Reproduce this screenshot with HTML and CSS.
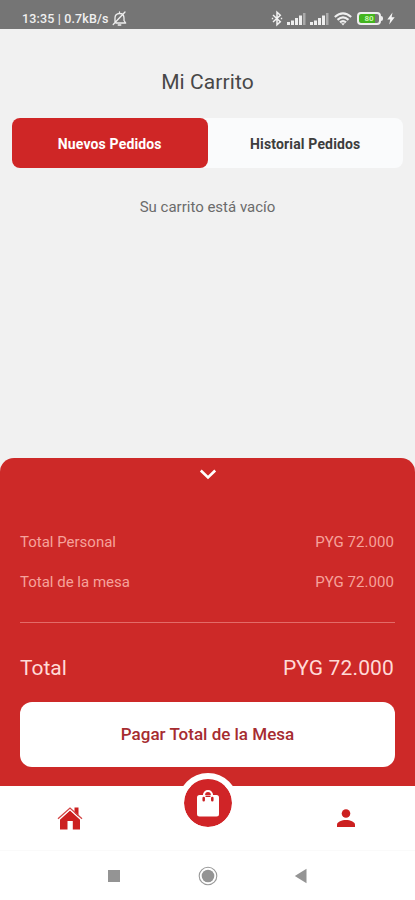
FILE: index.html
```html
<!DOCTYPE html>
<html lang="es">
<head>
<meta charset="utf-8">
<meta name="viewport" content="width=device-width, initial-scale=1">
<title>Mi Carrito</title>
<link rel="stylesheet" href="styles.css">
</head>
<body>
<div class="app">
  <header class="status">
    <span class="status-text">13:35 | 0.7kB/s</span>
    <svg class="bell" width="15" height="16" viewBox="0 0 15 16" fill="none" stroke="#eee" stroke-width="1.3" stroke-linecap="round" stroke-linejoin="round">
      <path d="M3 11.5V7C3 4.5 4.5 2.5 7.5 2.5S12 4.5 12 7v2.5l1.7 2.5H4M6.2 14h2.6M7.5 1v1.2M13 1 1.2 13.5"/>
    </svg>
    <div class="indicators">
      <svg width="12" height="17" viewBox="0 0 12 17" fill="none" stroke="#f2f2f2" stroke-width="1.500"><path d="M2 5 9.300 11.700 6 14.800V2.200l3.300 3.100L2 12"/><path d="M.8 8.500h1.400M9.800 8.500h1.400"/></svg>
      <svg class="signal" width="19" height="14" viewBox="0 0 19 14" fill="#eee"><path d="M0 10h3v3H0zM4 8.500h3V13H4zM8 6h3v7H8zM12 3.500h3V13h-3z"/><path d="M16 1h2.500v12H16z" fill="#aaa"/></svg>
      <svg class="signal" width="19" height="14" viewBox="0 0 19 14" fill="#eee"><path d="M0 10h3v3H0zM4 8.500h3V13H4zM8 6h3v7H8zM12 3.500h3V13h-3z"/><path d="M16 1h2.500v12H16z" fill="#aaa"/></svg>
      <svg class="wifi" width="18" height="14" viewBox="0 0 18 14" fill="none" stroke="#eee" stroke-width="2.100"><path d="M.8 5Q9-2.200 17.200 5M3.500 7.900Q9 3 14.500 7.900M6 10.400Q9 7.800 12 10.400"/><path d="M7 11.300h4L9 13.500z" fill="#eee" stroke="none"/></svg>
      <div class="battery"><span>80</span></div>
      <svg class="bolt" width="8" height="13" viewBox="0 0 8 13" fill="#f4f4f4"><path d="M5.500.5.3 7.500h3L2.200 12.500 7.700 5.300H4.600z"/></svg>
    </div>
  </header>

  <main class="cart">
    <h1 class="title">Mi Carrito</h1>
    <div class="tabs">
      <button class="tab tab-active">Nuevos Pedidos</button>
      <button class="tab">Historial Pedidos</button>
    </div>
    <p class="empty">Su carrito está vacío</p>
  </main>

  <section class="summary">
    <svg class="chevron" width="18" height="12" viewBox="0 0 18 12" fill="none" stroke="#fff" stroke-width="2.600"><path d="m1.800 1.500 7.200 7 7.200-7"/></svg>
    <div class="row"><span>Total Personal</span><span class="amount">PYG 72.000</span></div>
    <div class="row"><span>Total de la mesa</span><span class="amount">PYG 72.000</span></div>
    <div class="row total"><span>Total</span><span class="grand">PYG 72.000</span></div>
    <button class="pay">Pagar Total de la Mesa</button>
  </section>

  <nav class="tabbar">
    <svg class="home" width="26" height="24" viewBox="0 0 26 24"><path d="M17.500 1.500h4v9l-4-3zM13 4 23 13.500v10h-7.200v-8.500h-5.300v8.500H3V13.500z" fill="#cc2020"/><path d="M1.800 13.800 13 3.800l11.200 10" fill="none" stroke="#fff" stroke-width="1.100"/><path d="M1 12.700 13 2l12 10.700" fill="none" stroke="#d34444" stroke-width="1.300"/></svg>
    <div class="fab">
      <svg width="24" height="30" viewBox="0 0 24 30"><path d="M8 8.500V7a4 4 0 0 1 8 0v1.500" fill="none" stroke="#fff" stroke-width="2.200"/><rect x="1" y="7" width="22" height="21.500" rx="2.500" fill="#fff"/><path d="M7.700 10v2.200M16.300 10v2.200" stroke="#c91f22" stroke-width="2.500" stroke-linecap="round"/><path d="M9.500 8.300h5" stroke="#c91f22" stroke-width="1.400"/></svg>
    </div>
    <svg class="user" width="18" height="18" viewBox="0 0 18 18" fill="#cc2020"><circle cx="9" cy="4.500" r="4.300"/><path d="M0 18v-2.500c0-2.700 5-4.500 9-4.500s9 1.800 9 4.500V18z"/></svg>
  </nav>

  <footer class="system">
    <svg width="14" height="14" viewBox="0 0 14 14"><path d="M1 1h12v12H1z" fill="#949494"/></svg>
    <svg width="20" height="20" viewBox="0 0 20 20"><circle cx="10" cy="10" r="8.800" fill="#fff" stroke="#999" stroke-width="1.100"/><circle cx="10" cy="10" r="6.300" fill="#949494"/></svg>
    <svg width="14" height="16" viewBox="0 0 14 16"><path d="M.8 8 12.500.7v14.600z" fill="#949494"/></svg>
  </footer>
</div>
</body>
</html>
```

FILE: styles.css
```css
* { box-sizing: border-box; }
body {
  margin: 0;
  font-family: Roboto, "Liberation Sans", sans-serif;
  background: #f1f1f1;
}
button { border: 0; padding: 0; font: inherit; }
svg { display: block; flex: none; }
.app {
  width: 415px;
  height: 900px;
  display: flex;
  flex-direction: column;
  overflow: hidden;
}
.status {
  height: 29px;
  background: #757575;
  color: #f0f0f0;
  display: flex;
  align-items: center;
  padding: 8px 20px 0 22px;
}
.status-text {
  width: 90px;
  font-size: 12.5px;
  font-weight: 500;
  line-height: 16px;
  letter-spacing: 0.15px;
  white-space: nowrap;
}
.indicators { margin-left: auto; display: flex; align-items: center; }
.signal { margin-left: 4px; }
.wifi { margin-left: 5px; }
.battery {
  position: relative;
  width: 24px;
  height: 13px;
  margin-left: 5px;
  border: 2px solid #eee;
  border-radius: 4px;
  background: linear-gradient(90deg, #43b51f 78%, #777 78%);
  background-clip: padding-box;
  color: #c6f5ae;
  font-size: 8px;
  font-weight: 700;
  line-height: 9px;
  text-align: center;
}
.battery::after {
  content: "";
  position: absolute;
  right: -4px;
  top: 2px;
  width: 3px;
  height: 5px;
  border-radius: 0 2px 2px 0;
  background: #eee;
}
.bolt { margin-left: 6px; }
.cart { flex: 1; padding: 0 12px; }
.title {
  margin: 38px 0 21px;
  font-size: 21px;
  line-height: 30px;
  font-weight: 400;
  text-align: center;
  color: #484848;
  letter-spacing: 0.1px;
}
.tabs {
  display: flex;
  width: 391px;
  height: 50px;
  border-radius: 8px;
  background: #fafbfc;
}
.tab {
  flex: 1;
  padding-top: 2px;
  border-radius: 8px;
  background: transparent;
  color: #3d3d3d;
  font-size: 14px;
  font-weight: 700;
  letter-spacing: 0.15px;
}
.tab-active { background: #cf2626; color: #fff; }
.empty {
  margin: 29px 0 0;
  font-size: 15px;
  line-height: 20px;
  text-align: center;
  color: #6b6b6b;
}
.summary {
  height: 328px;
  padding: 11px 20px 0;
  border-radius: 14px 14px 0 0;
  background: #cd2928;
  color: #f6a29b;
  font-size: 15px;
}
.chevron { margin: 0 auto 41px; }
.row {
  display: flex;
  justify-content: space-between;
  align-items: center;
  height: 40px;
}
.amount { letter-spacing: 0.05px; padding-right: 1px; }
.total {
  margin-top: 20px;
  height: 80px;
  padding-top: 11px;
  border-top: 1px solid #e36b68;
  font-size: 21px;
  color: #ffdad7;
}
.grand { letter-spacing: 0.15px; padding-right: 1px; }
.pay {
  display: block;
  width: 375px;
  height: 65px;
  padding-bottom: 1px;
  border-radius: 12px;
  background: #fff;
  color: #a62c30;
  font-size: 17px;
  font-weight: 500;
}
.tabbar {
  position: relative;
  height: 65px;
  background: #fff;
  display: flex;
  justify-content: space-between;
  align-items: center;
  padding: 0 60px 0 57px;
  border-bottom: 1px solid #fafafa;
}
.fab {
  position: absolute;
  left: 178px;
  top: -13px;
  width: 60px;
  height: 60px;
  border: 6px solid #fff;
  border-radius: 50%;
  background: #d02427;
  background-clip: padding-box;
  display: flex;
  align-items: center;
  justify-content: center;
}
.system {
  height: 49px;
  background: #fff;
  display: flex;
  align-items: center;
  justify-content: space-between;
  padding: 0 107px 0 107px;
}
```
